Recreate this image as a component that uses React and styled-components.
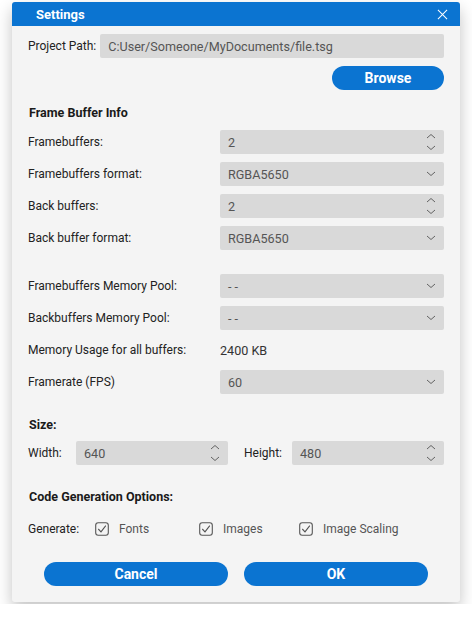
import React from "react";
import styled, { createGlobalStyle } from "styled-components";

const Global = createGlobalStyle`
  body {
    margin: 0;
    background: #ffffff;
    font-family: Roboto, "Liberation Sans", sans-serif;
    color: #222;
  }
`;

const Dialog = styled.div`
  width: 448px;
  margin: 2px 12px;
  background: #f4f4f4;
  border-radius: 3px;
  overflow: hidden;
  box-shadow: 0 7px 16px rgba(0, 0, 0, 0.24);
`;

const TitleBar = styled.div`
  height: 24px;
  background: #0b74d1;
  color: #fff;
  display: flex;
  align-items: center;
  justify-content: space-between;
  padding: 0 12px 0 24px;
  font-size: 13px;
  font-weight: 700;
`;

const CloseBtn = styled.svg`
  width: 11px;
  height: 11px;
`;

const Body = styled.div`
  padding: 8px 16px 16px 16px;
`;

const PathRow = styled.div`
  display: flex;
  align-items: center;
  gap: 4px;
  font-size: 12px;
`;

const Field = styled.div`
  position: relative;
  height: 24px;
  background: #d9d9d9;
  border-radius: 2px;
  display: flex;
  align-items: center;
  padding-left: 8px;
  font-size: 12.6px;
  color: #555;
  flex: ${(p) => (p.$w ? `0 0 ${p.$w}px` : "1")};
  box-sizing: border-box;
`;

const Right = styled.div`
  display: flex;
  justify-content: flex-end;
  margin-top: 8px;
`;

const Pill = styled.button`
  width: ${(p) => p.$w}px;
  height: 24px;
  border: none;
  border-radius: 12px;
  background: #0b74d1;
  color: #fff;
  font-family: inherit;
  font-size: 14px;
  font-weight: 700;
  padding: 0;
`;

const Heading = styled.div`
  font-size: 12.5px;
  font-weight: 700;
  color: #1a1a1a;
  height: 18px;
  line-height: 18px;
  margin: ${(p) => p.$m};
  padding-left: 1px;
`;

const Rows = styled.div`
  display: flex;
  flex-direction: column;
  gap: 8px;
  margin-top: ${(p) => p.$top || 0}px;
`;

const Row = styled.div`
  display: grid;
  grid-template-columns: 192px 224px;
  align-items: center;
  height: 24px;
  font-size: 12px;
`;

const Plain = styled.span`
  font-size: 12.6px;
  color: #333;
`;

const IconWrap = styled.svg`
  position: absolute;
  right: 8px;
  top: 50%;
  transform: translateY(-50%);
  width: 10px;
  height: ${(p) => p.$h}px;
`;

const SizeRow = styled.div`
  display: flex;
  align-items: center;
  height: 24px;
  font-size: 12px;
  margin-top: 7px;
`;

const SizeLabel = styled.span`
  width: ${(p) => p.$w}px;
  flex: 0 0 auto;
  margin-left: ${(p) => p.$ml || 0}px;
`;

const GenRow = styled.div`
  display: flex;
  align-items: center;
  font-size: 12px;
  height: 20px;
  margin-top: 13px;
`;

const GenLabel = styled.span`
  width: 67px;
`;

const Check = styled.label`
  display: flex;
  align-items: center;
  gap: 10px;
  width: ${(p) => p.$w}px;
  color: #555;
`;

const Box = styled.svg`
  width: 14px;
  height: 14px;
  flex: 0 0 auto;
`;

const Buttons = styled.div`
  display: flex;
  gap: 16px;
  padding: 0 16px;
  margin-top: 23px;
`;

const Spin = () => (
  <IconWrap $h={18} viewBox="0 0 10 18" fill="none" stroke="#555" strokeWidth="0.9">
    <path d="M1 5 L5 1.5 L9 5" />
    <path d="M1 13 L5 16.5 L9 13" />
  </IconWrap>
);

const Drop = () => (
  <IconWrap $h={6} viewBox="0 0 10 6" fill="none" stroke="#555" strokeWidth="0.9">
    <path d="M1 1 L5 4.5 L9 1" />
  </IconWrap>
);

const Spinner = ({ value, w }) => (
  <Field $w={w}>
    {value}
    <Spin />
  </Field>
);

const Select = ({ value }) => (
  <Field>
    {value}
    <Drop />
  </Field>
);

const CheckItem = ({ label, w }) => (
  <Check $w={w}>
    <Box viewBox="0 0 14 14" fill="none" stroke="#555" strokeWidth="1.1">
      <rect x="0.7" y="0.7" width="12.6" height="12.6" rx="2.5" />
      <path d="M3.3 7 L6 9.8 L10.8 3.6" />
    </Box>
    {label}
  </Check>
);

export default function App() {
  return (
    <>
      <Global />
      <Dialog>
        <TitleBar>
          <span>Settings</span>
          <CloseBtn viewBox="0 0 12 12" stroke="#fff" strokeWidth="1.1">
            <path d="M1 1 L11 11 M11 1 L1 11" />
          </CloseBtn>
        </TitleBar>
        <Body>
          <PathRow>
            <span>Project Path:</span>
            <Field>C:User/Someone/MyDocuments/file.tsg</Field>
          </PathRow>
          <Right>
            <Pill $w={112}>Browse</Pill>
          </Right>

          <Heading $m="14px 0 0 0">Frame Buffer Info</Heading>
          <Rows $top={8}>
            <Row>
              <span>Framebuffers:</span>
              <Spinner value="2" />
            </Row>
            <Row>
              <span>Framebuffers format:</span>
              <Select value="RGBA5650" />
            </Row>
            <Row>
              <span>Back buffers:</span>
              <Spinner value="2" />
            </Row>
            <Row>
              <span>Back buffer format:</span>
              <Select value="RGBA5650" />
            </Row>
          </Rows>

          <Rows $top={24}>
            <Row>
              <span>Framebuffers Memory Pool:</span>
              <Select value="- -" />
            </Row>
            <Row>
              <span>Backbuffers Memory Pool:</span>
              <Select value="- -" />
            </Row>
            <Row>
              <span>Memory Usage for all buffers:</span>
              <Plain>2400 KB</Plain>
            </Row>
            <Row>
              <span>Framerate (FPS)</span>
              <Select value="60" />
            </Row>
          </Rows>

          <Heading $m="22px 0 0 0">Size:</Heading>
          <SizeRow>
            <SizeLabel $w={48}>Width:</SizeLabel>
            <Spinner value="640" w={152} />
            <SizeLabel $w={48} $ml={16}>
              Height:
            </SizeLabel>
            <Spinner value="480" w={152} />
          </SizeRow>

          <Heading $m="23px 0 0 0">Code Generation Options:</Heading>
          <GenRow>
            <GenLabel>Generate:</GenLabel>
            <CheckItem label="Fonts" w={104} />
            <CheckItem label="Images" w={100} />
            <CheckItem label="Image Scaling" w={120} />
          </GenRow>

          <Buttons>
            <Pill $w={184}>Cancel</Pill>
            <Pill $w={184}>OK</Pill>
          </Buttons>
        </Body>
      </Dialog>
    </>
  );
}
